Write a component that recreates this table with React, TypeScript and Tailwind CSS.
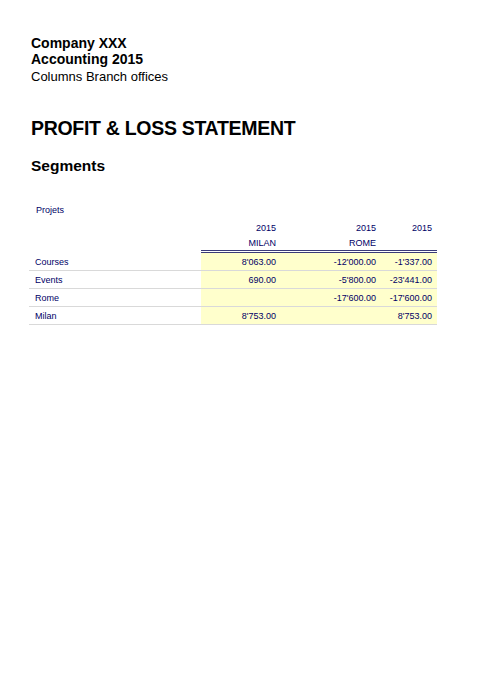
const rows = [
  { label: "Courses", milan: "8'063.00", rome: "-12'000.00", total: "-1'337.00" },
  { label: "Events", milan: "690.00", rome: "-5'800.00", total: "-23'441.00" },
  { label: "Rome", milan: "", rome: "-17'600.00", total: "-17'600.00" },
  { label: "Milan", milan: "8'753.00", rome: "", total: "8'753.00" },
];

export default function App() {
  return (
    <div className="w-[499px] h-[683px] bg-white font-['Liberation_Sans',Arial,sans-serif] text-black">
      <div className="pt-[35px] pl-[31px]">
        <div className="text-[14px] font-bold leading-[16px]">Company XXX</div>
        <div className="text-[14px] font-bold leading-[16px]">Accounting 2015</div>
        <div className="text-[13px] leading-[18px] mt-[1px]">Columns Branch offices</div>
        <h1 className="text-[19.5px] font-bold leading-[24px] mt-[30px] tracking-[-0.3px]">PROFIT &amp; LOSS STATEMENT</h1>
        <h2 className="text-[15.5px] font-bold leading-[20px] mt-[16px]">Segments</h2>
      </div>

      <div className="ml-[29px] mt-[27px] w-[408px] text-[9px] text-[#000066]">
        <div className="pl-[7px] leading-[14px]">Projets</div>
        <div className="grid grid-cols-[172px_79px_100px_57px] mt-[4px]">
          <div className="h-[15px]" />
          <div className="h-[15px] leading-[15px] text-right pr-[4px]">2015</div>
          <div className="h-[15px] leading-[15px] text-right pr-[4px]">2015</div>
          <div className="h-[15px] leading-[15px] text-right pr-[5px]">2015</div>

          <div className="h-[14px]" />
          <div className="h-[14px] leading-[14px] text-right pr-[4px] border-b-[3px] border-double border-[#3a3a78] box-content">MILAN</div>
          <div className="h-[14px] leading-[14px] text-right pr-[4px] border-b-[3px] border-double border-[#3a3a78] box-content">ROME</div>
          <div className="h-[14px] border-b-[3px] border-double border-[#3a3a78] box-content" />

          {rows.map((r) => (
            <div key={r.label} className="contents">
              <div className="h-[18px] leading-[18px] pl-[6px] border-b border-[#d9d9d9]">{r.label}</div>
              <div className="h-[18px] leading-[18px] text-right pr-[4px] bg-[#ffffcc] border-b border-[#d9d9d9]">{r.milan}</div>
              <div className="h-[18px] leading-[18px] text-right pr-[4px] bg-[#ffffcc] border-b border-[#d9d9d9]">{r.rome}</div>
              <div className="h-[18px] leading-[18px] text-right pr-[5px] bg-[#ffffcc] border-b border-[#d9d9d9]">{r.total}</div>
            </div>
          ))}
        </div>
      </div>
    </div>
  );
}
